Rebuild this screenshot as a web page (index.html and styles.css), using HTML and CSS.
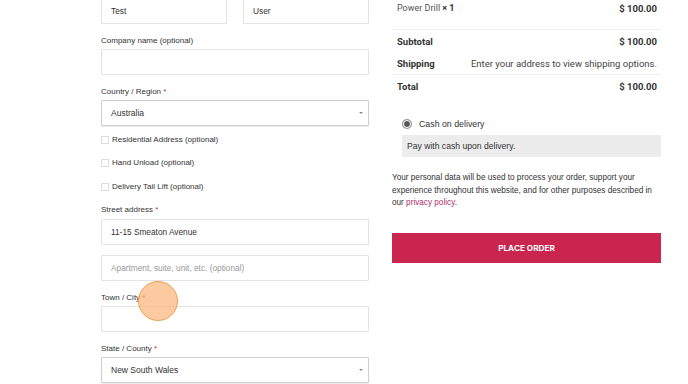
FILE: index.html
```html
<!DOCTYPE html>
<html lang="en">
<head>
  <meta charset="UTF-8" />
  <meta name="viewport" content="width=device-width, initial-scale=1.0" />
  <title>Checkout</title>
  <link rel="stylesheet" href="styles.css">
</head>
<body>
  <div class="checkout">
    <div class="billing">
      <div class="field name-row">
        <input type="text" value="Test">
        <input type="text" value="User">
      </div>
      <div class="field">
        <label>Company name (optional)</label>
        <input type="text">
      </div>
      <div class="field">
        <label>Country / Region <span class="req">*</span></label>
        <div class="select">Australia</div>
      </div>
      <div class="checks">
        <label class="check"><span class="box"></span>Residential Address (optional)</label>
        <label class="check"><span class="box"></span>Hand Unload (optional)</label>
        <label class="check"><span class="box"></span>Delivery Tail Lift (optional)</label>
      </div>
      <div class="field">
        <label>Street address <span class="req">*</span></label>
        <input type="text" value="11-15 Smeaton Avenue">
      </div>
      <div class="field">
        <input type="text" placeholder="Apartment, suite, unit, etc. (optional)">
      </div>
      <div class="field">
        <label>Town / City <span class="req">*</span></label>
        <input type="text">
      </div>
      <div class="field">
        <label>State / County <span class="req">*</span></label>
        <div class="select">New South Wales</div>
      </div>
    </div>

    <div class="review">
      <div class="row product">
        <span>Power Drill <b>&times; 1</b></span>
        <b>$ 100.00</b>
      </div>
      <div class="row">
        <b>Subtotal</b>
        <b>$ 100.00</b>
      </div>
      <div class="row">
        <b>Shipping</b>
        <span>Enter your address to view shipping options.</span>
      </div>
      <div class="row total">
        <b>Total</b>
        <b>$ 100.00</b>
      </div>

      <div class="payment">
        <div class="method"><span class="radio"></span>Cash on delivery</div>
        <div class="method-box">Pay with cash upon delivery.</div>
      </div>

      <p class="privacy">Your personal data will be used to process your order, support your experience throughout this website, and for other purposes described in our <a href="#">privacy policy</a>.</p>

      <button class="place-order">PLACE ORDER</button>
    </div>
  </div>

  <div class="click-dot"></div>
</body>
</html>
```

FILE: styles.css
```css
body, html {
  margin: 0;
  height: 100%;
  overflow: hidden;
  background: #fff;
  font-family: "Liberation Sans", Arial, sans-serif;
  color: #333;
}
.checkout {
  display: grid;
  grid-template-columns: 268px 269px;
  column-gap: 23px;
  margin: -2px 0 0 101px;
}
.field {
  margin-bottom: 10.5px;
}
.field label {
  display: block;
  font-size: 8px;
  line-height: 12px;
  margin-bottom: 2.5px;
}
.req {
  color: #c0392b;
}
.name-row {
  display: grid;
  grid-template-columns: 126px 126px;
  column-gap: 16px;
}
input[type='text'], .select {
  display: block;
  width: 100%;
  height: 26px;
  box-sizing: border-box;
  padding: 0 9px;
  border: 1px solid #e3e3e3;
  border-radius: 1px;
  font-family: "Liberation Sans", Arial, sans-serif;
  font-size: 8.3px;
  color: #333;
  background: #fff;
  outline: none;
}
input::placeholder {
  color: #999;
}
.select {
  position: relative;
  line-height: 24px;
  border-color: #cfcfcf;
  box-shadow: 0 1px 1px rgba(0, 0, 0, 0.08);
  font-size: 8.5px;
}
.select::after {
  content: "";
  position: absolute;
  right: 5px;
  top: 11px;
  border-left: 2px solid transparent;
  border-right: 2px solid transparent;
  border-top: 2px solid #888;
}
.checks {
  margin-top: -3px;
}
.check {
  display: flex;
  align-items: center;
  font-size: 8px;
  line-height: 12px;
  margin-bottom: 11.5px;
}
.box {
  width: 6px;
  height: 6px;
  border: 1px solid #ddd;
  margin-right: 3px;
}

/* order review */
.review {
  font-family: Roboto, "Liberation Sans", sans-serif;
  font-size: 9.5px;
  color: #333;
}
.row {
  display: flex;
  justify-content: space-between;
  align-items: center;
  height: 22px;
  padding: 0 4px 0 5px;
}
.row span {
  color: #444;
}
.row b {
  font-weight: 700;
}
.product {
  height: 20px;
  padding-bottom: 11px;
  border-bottom: 1px solid #eee;
}
.product span {
  font-size: 9px;
  color: #555;
}
.product span b {
  color: #333;
}
.row.total {
  border-top: 1px solid #eee;
}
.payment {
  margin: 20px 0 0 10px;
  font-family: "Liberation Sans", Arial, sans-serif;
  font-size: 8.6px;
}
.method {
  display: flex;
  align-items: center;
  height: 14px;
  padding-left: 1px;
  margin-bottom: 4px;
  font-size: 8.8px;
}
.radio {
  width: 6px;
  height: 6px;
  border-radius: 50%;
  background: #555;
  border: 1.5px solid #fff;
  box-shadow: 0 0 0 1px #999;
  margin-right: 8px;
}
.method-box {
  background: #ececec;
  height: 22px;
  line-height: 22px;
  padding-left: 5px;
}
.privacy {
  font-family: "Liberation Sans", Arial, sans-serif;
  font-size: 8.2px;
  line-height: 12.5px;
  margin: 15px 0 0;
}
.privacy a {
  color: #b0306a;
  text-decoration: none;
}
.place-order {
  display: block;
  width: 100%;
  height: 30px;
  margin-top: 23px;
  border: none;
  background: #c9254f;
  color: #fff;
  font-family: Inter, sans-serif;
  font-weight: 700;
  font-size: 8.2px;
}

/* click indicator */
.click-dot {
  position: absolute;
  left: 138px;
  top: 281px;
  width: 38px;
  height: 38px;
  border-radius: 50%;
  background: rgba(250, 180, 120, 0.7);
  border: 1.5px solid #f0a050;
}
```
